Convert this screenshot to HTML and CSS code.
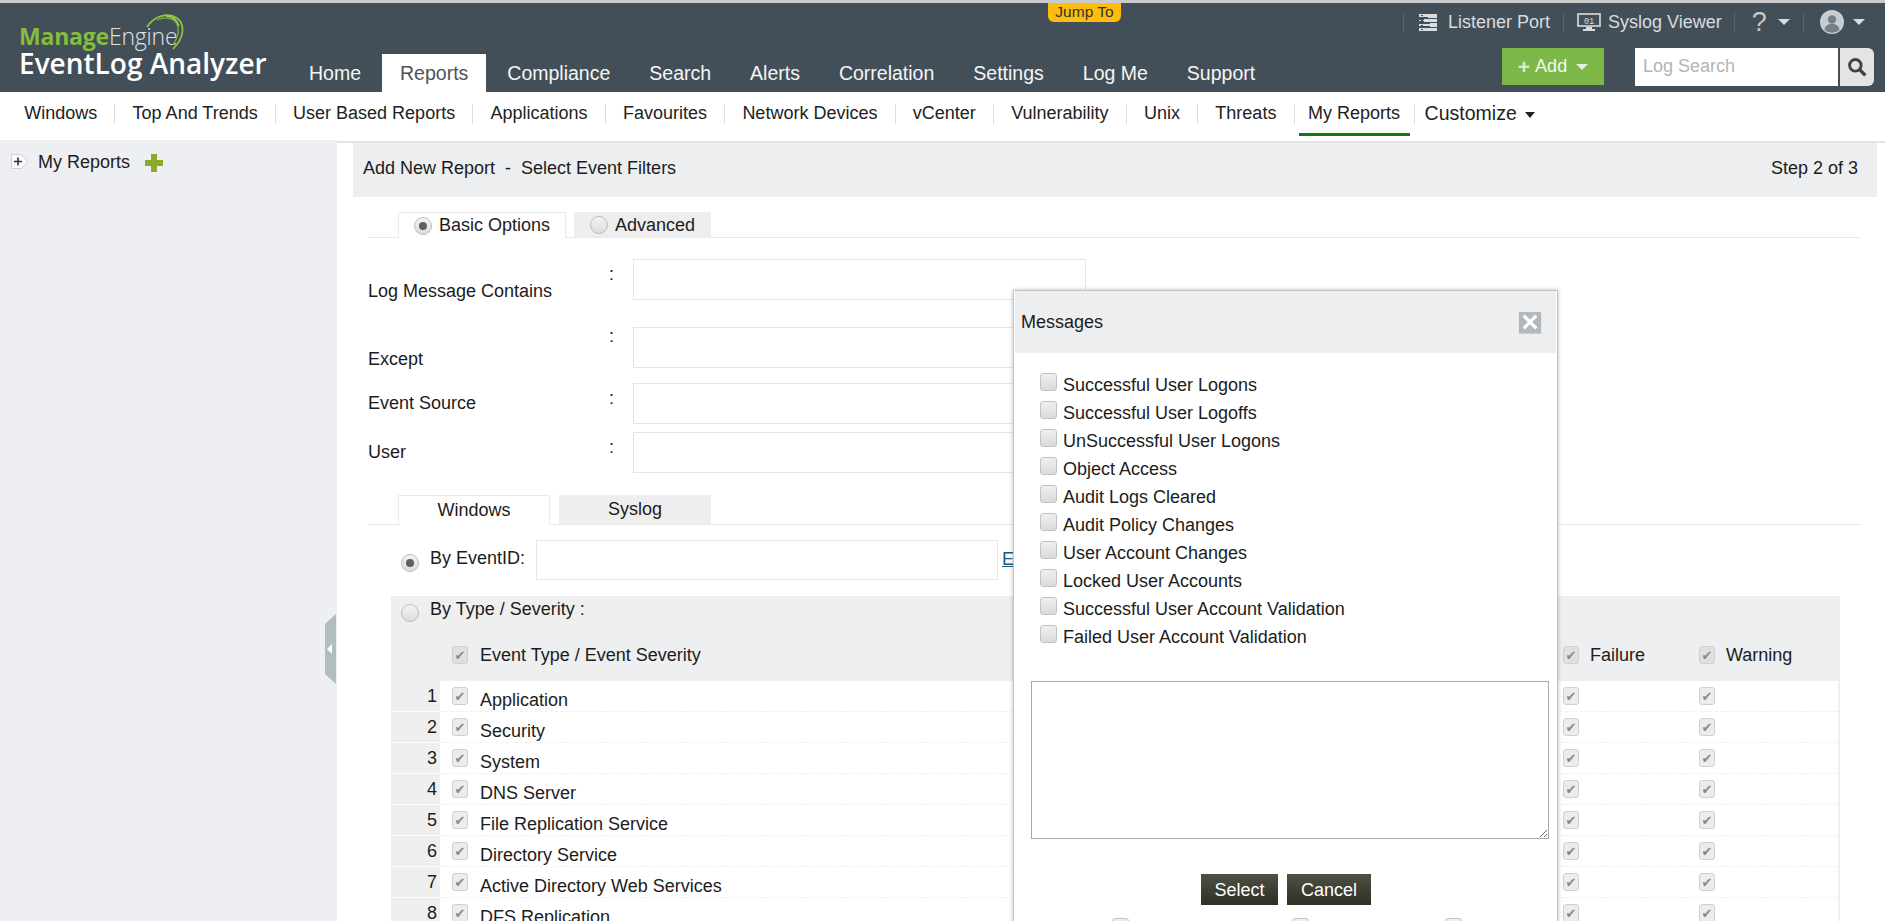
FILE: index.html
```html
<!DOCTYPE html>
<html lang="en">
<head>
<meta charset="utf-8">
<title>EventLog Analyzer</title>
<link rel="stylesheet" href="styles.css">
</head>
<body>
<div class="page">
  <header class="header">
    <div class="logo">
      <div class="logo-me"><b>Manage</b>Engine</div>
      <svg class="logo-arc" width="42" height="40" viewBox="0 0 42 40" fill="none"><path d="M1 15C8 4 22 0 31 6c8 6 8 19-4 31" stroke="#8cc63f" stroke-width="1.700"/><path d="M11 8c9-4 17-2 20 4 3 6 1 13-4 21" stroke="#7fae3c" stroke-width="1.300"/><path d="M20 4c7 0 11 4 13 10" stroke="#a8cf6a" stroke-width="1.300"/></svg>
      <div class="logo-product">EventLog Analyzer</div>
    </div>
    <nav class="main-nav">
      <a class="main-tab">Home</a>
      <a class="main-tab is-active">Reports</a>
      <a class="main-tab">Compliance</a>
      <a class="main-tab">Search</a>
      <a class="main-tab">Alerts</a>
      <a class="main-tab">Correlation</a>
      <a class="main-tab">Settings</a>
      <a class="main-tab">Log Me</a>
      <a class="main-tab">Support</a>
    </nav>
    <div class="header-right">
      <div class="util-row">
        <i class="util-sep"></i>
        <svg class="util-icon" width="18" height="17" viewBox="0 0 18 17"><path fill="#d9dcde" d="M0 0h18v4H9V3H0zM0 6h5V5h13v3H5V7H0zM0 10h11V9h7v4h-7v-1H0zM0 14h18v3H0z"/><path fill="#434f58" d="M2 1h2v1H2zM2 6h2v1H2zM2 11h2v1H2zM2 15h2v1H2z"/></svg>
        <a class="util-link util-link--first">Listener Port</a>
        <i class="util-sep"></i>
        <svg class="util-icon util-icon--mon" width="24" height="18" viewBox="0 0 24 18"><rect x="1" y="1" width="22" height="12" fill="none" stroke="#d9dcde" stroke-width="1.600"/><text x="12" y="10.500" font-size="8.500" text-anchor="middle" font-family="Liberation Mono" fill="#d9dcde">01</text><path fill="#d9dcde" d="M9 14h6v2h3v2H6v-2h3z"/></svg>
        <a class="util-link util-link--mon">Syslog Viewer</a>
        <i class="util-sep util-sep--help"></i>
        <span class="help-mark">?</span>
        <i class="caret caret--help"></i>
        <i class="util-sep util-sep--user"></i>
        <svg class="avatar" width="24" height="24" viewBox="0 0 24 24"><circle cx="12" cy="12" r="12" fill="#c6ced3"/><circle cx="12" cy="9.500" r="4.200" fill="#74808a"/><path fill="#74808a" d="M4.500 20c.5-4.500 3.500-6 7.500-6s7 1.500 7.500 6a12 12 0 0 1-15 0z"/></svg>
        <i class="caret caret--user"></i>
      </div>
      <div class="action-row">
        <button class="add-btn"><span class="add-plus">+</span> Add <i class="caret caret--add"></i></button>
        <input class="log-search" type="text" placeholder="Log Search">
        <button class="search-btn" aria-label="Search"><svg width="20" height="20" viewBox="0 0 18 18" fill="none"><circle cx="7.500" cy="7.500" r="5.200" stroke="#3b434a" stroke-width="2.600"/><path d="M11.500 11.500 16.500 16.500" stroke="#3b434a" stroke-width="3"/></svg></button>
      </div>
    </div>
  </header>
  <div class="jump-to">Jump To</div>

  <nav class="sub-nav">
    <a class="sub-link">Windows</a><i class="sub-sep"></i>
    <a class="sub-link">Top And Trends</a><i class="sub-sep"></i>
    <a class="sub-link">User Based Reports</a><i class="sub-sep"></i>
    <a class="sub-link">Applications</a><i class="sub-sep"></i>
    <a class="sub-link">Favourites</a><i class="sub-sep"></i>
    <a class="sub-link">Network Devices</a><i class="sub-sep"></i>
    <a class="sub-link">vCenter</a><i class="sub-sep"></i>
    <a class="sub-link">Vulnerability</a><i class="sub-sep"></i>
    <a class="sub-link">Unix</a><i class="sub-sep"></i>
    <a class="sub-link">Threats</a><i class="sub-sep"></i>
    <a class="sub-link is-current">My Reports</a><i class="sub-sep"></i>
    <a class="sub-link sub-link--custom">Customize <i class="caret caret--dark"></i></a>
  </nav>

  <main class="main">
    <aside class="sidebar">
      <svg class="tree-toggle" width="18" height="17" viewBox="0 0 18 17" fill="none"><path d="M.5 1.500h10l6.500 7-6.500 7H.5z" fill="#fbfbfb" stroke="#cfd1d4"/><path d="M3 8.500h8M7 4.500v8" stroke="#333" stroke-width="1.600"/></svg>
      <span class="side-label">My Reports</span>
      <svg class="side-add" width="18" height="18" viewBox="0 0 18 18"><path fill="#8aab2b" d="M6 0h6v6h6v6h-6v6H6v-6H0V6h6z"/></svg>
    </aside>
    <section class="content">
      <div class="title-bar">
        <span>Add New Report &nbsp;-&nbsp; Select Event Filters</span>
        <span>Step 2 of 3</span>
      </div>

      <div class="tabs tabs--options">
        <div class="tab tab--on tab--basic"><input class="radio" type="radio" name="mode" checked> Basic Options</div>
        <div class="tab tab--off tab--adv"><input class="radio" type="radio" name="mode"> Advanced</div>
      </div>

      <div class="form-row form-row--first form-row--tall">
        <label class="form-label">Log Message Contains</label><span class="form-colon form-colon--a">:</span><input class="form-input" type="text">
      </div>
      <div class="form-row form-row--second form-row--tall">
        <label class="form-label">Except</label><span class="form-colon form-colon--b">:</span><input class="form-input" type="text">
      </div>
      <div class="form-row form-row--third">
        <label class="form-label">Event Source</label><span class="form-colon form-colon--c">:</span><input class="form-input" type="text">
      </div>
      <div class="form-row form-row--fourth">
        <label class="form-label">User</label><span class="form-colon form-colon--c">:</span><input class="form-input" type="text">
      </div>

      <div class="tabs tabs--source">
        <div class="tab tab--on tab--win">Windows</div>
        <div class="tab tab--off tab--sys">Syslog</div>
      </div>

      <div class="event-id-row">
        <input class="radio radio--event" type="radio" name="by" checked>
        <span class="event-id-label">By EventID:</span>
        <input class="event-id-input" type="text">
        <a class="event-link">Ev</a>
      </div>

      <div class="severity">
        <div class="severity-top">
          <input class="radio radio--sev" type="radio" name="by">
          <span class="severity-title">By Type / Severity :</span>
        </div>
        <div class="severity-head">
          <div class="col-main"><input class="chk" type="checkbox" checked disabled><span class="chk-text">Event Type / Event Severity</span></div>
          <div class="col-a"><input class="chk" type="checkbox" checked disabled><span class="col-text">Failure</span></div>
          <div class="col-b"><input class="chk" type="checkbox" checked disabled><span class="col-text">Warning</span></div>
        </div>
        <div class="sev-row"><span class="sev-num">1</span><div class="sev-cells"><div class="col-main"><input class="chk" type="checkbox" checked disabled><span class="chk-text">Application</span></div><div class="col-a"><input class="chk" type="checkbox" checked disabled></div><div class="col-b"><input class="chk" type="checkbox" checked disabled></div></div></div>
        <div class="sev-row"><span class="sev-num">2</span><div class="sev-cells"><div class="col-main"><input class="chk" type="checkbox" checked disabled><span class="chk-text">Security</span></div><div class="col-a"><input class="chk" type="checkbox" checked disabled></div><div class="col-b"><input class="chk" type="checkbox" checked disabled></div></div></div>
        <div class="sev-row"><span class="sev-num">3</span><div class="sev-cells"><div class="col-main"><input class="chk" type="checkbox" checked disabled><span class="chk-text">System</span></div><div class="col-a"><input class="chk" type="checkbox" checked disabled></div><div class="col-b"><input class="chk" type="checkbox" checked disabled></div></div></div>
        <div class="sev-row"><span class="sev-num">4</span><div class="sev-cells"><div class="col-main"><input class="chk" type="checkbox" checked disabled><span class="chk-text">DNS Server</span></div><div class="col-a"><input class="chk" type="checkbox" checked disabled></div><div class="col-b"><input class="chk" type="checkbox" checked disabled></div></div></div>
        <div class="sev-row"><span class="sev-num">5</span><div class="sev-cells"><div class="col-main"><input class="chk" type="checkbox" checked disabled><span class="chk-text">File Replication Service</span></div><div class="col-a"><input class="chk" type="checkbox" checked disabled></div><div class="col-b"><input class="chk" type="checkbox" checked disabled></div></div></div>
        <div class="sev-row"><span class="sev-num">6</span><div class="sev-cells"><div class="col-main"><input class="chk" type="checkbox" checked disabled><span class="chk-text">Directory Service</span></div><div class="col-a"><input class="chk" type="checkbox" checked disabled></div><div class="col-b"><input class="chk" type="checkbox" checked disabled></div></div></div>
        <div class="sev-row"><span class="sev-num">7</span><div class="sev-cells"><div class="col-main"><input class="chk" type="checkbox" checked disabled><span class="chk-text">Active Directory Web Services</span></div><div class="col-a"><input class="chk" type="checkbox" checked disabled></div><div class="col-b"><input class="chk" type="checkbox" checked disabled></div></div></div>
        <div class="sev-row"><span class="sev-num">8</span><div class="sev-cells"><div class="col-main"><input class="chk" type="checkbox" checked disabled><span class="chk-text">DFS Replication</span></div><div class="col-a"><input class="chk" type="checkbox" checked disabled></div><div class="col-b"><input class="chk" type="checkbox" checked disabled></div></div></div>
      </div>
    </section>
  </main>

  <svg class="side-grip" width="12" height="70" viewBox="0 0 12 70"><path fill="#b1bdc0" d="M11 0v70L0 60V10z"/><path fill="#fff" d="M2 35l5-5v10z"/></svg>

  <div class="modal">
    <div class="modal-head">
      <span>Messages</span>
      <span class="modal-close"><svg width="16" height="16" viewBox="0 0 14 14"><path d="M1.500 1.500l11 11M12.500 1.500l-11 11" stroke="#fff" stroke-width="2.800"/></svg></span>
    </div>
    <div class="modal-list">
      <label class="msg"><input class="msg-chk" type="checkbox"><span>Successful User Logons</span></label>
      <label class="msg"><input class="msg-chk" type="checkbox"><span>Successful User Logoffs</span></label>
      <label class="msg"><input class="msg-chk" type="checkbox"><span>UnSuccessful User Logons</span></label>
      <label class="msg"><input class="msg-chk" type="checkbox"><span>Object Access</span></label>
      <label class="msg"><input class="msg-chk" type="checkbox"><span>Audit Logs Cleared</span></label>
      <label class="msg"><input class="msg-chk" type="checkbox"><span>Audit Policy Changes</span></label>
      <label class="msg"><input class="msg-chk" type="checkbox"><span>User Account Changes</span></label>
      <label class="msg"><input class="msg-chk" type="checkbox"><span>Locked User Accounts</span></label>
      <label class="msg"><input class="msg-chk" type="checkbox"><span>Successful User Account Validation</span></label>
      <label class="msg"><input class="msg-chk" type="checkbox"><span>Failed User Account Validation</span></label>
    </div>
    <textarea class="modal-text"></textarea>
    <div class="modal-actions">
      <button class="dark-btn dark-btn--select">Select</button>
      <button class="dark-btn dark-btn--cancel">Cancel</button>
    </div>
    <div class="modal-below">
      <input class="msg-chk" type="checkbox">
      <input class="msg-chk" type="checkbox">
      <input class="msg-chk" type="checkbox">
    </div>
  </div>
</div>
</body>
</html>
```

FILE: styles.css
```css
* { box-sizing: border-box; }
html, body { margin: 0; height: 100%; overflow: hidden; }
body { font-family: "Liberation Sans", Arial, sans-serif; font-size: 18px; color: #1c1c1c; background: #fff; }
a { color: inherit; text-decoration: none; }
i { display: block; }
button { font-family: inherit; border: 0; padding: 0; }
input, textarea { font-family: inherit; margin: 0; }

.page { height: 100%; display: flex; flex-direction: column; overflow: hidden; position: relative; }

/* header */
.header { flex: none; height: 92px; border-top: 3px solid #c9cbcd; background: #434f58; display: flex; color: #fff; position: relative; }
.logo { width: 291px; flex: none; padding: 20px 0 0 19px; position: relative; }
.logo-me { font-family: "Open Sans", sans-serif; font-size: 23px; line-height: 26px; color: #dfe3e5; font-weight: 300; letter-spacing: -.2px; }
.logo-me b { color: #85bd3c; font-weight: 700; }
.logo-arc { position: absolute; left: 146px; top: 9px; }
.logo-product { font-family: "Open Sans", sans-serif; font-weight: 600; font-size: 28px; line-height: 32px; margin-top: -2px; color: #fff; white-space: nowrap; }

.main-nav { display: flex; align-self: flex-end; gap: 3px; flex: none; }
.main-tab { height: 38px; line-height: 38px; padding: 0 18px; font-size: 19.5px; color: #f4f5f5; }
.main-tab.is-active { background: #fff; color: #4e5358; }

.header-right { margin-left: auto; width: 482px; flex: none; display: flex; flex-direction: column; }
.util-row { height: 45px; display: flex; align-items: center; padding-bottom: 7px; color: #d9dcde; }
.util-sep { width: 1px; height: 21px; background: #58636b; }
.util-icon { margin-left: 15px; flex: none; }
.util-icon--mon { margin-left: 13px; }
.util-link { margin-left: 11px; white-space: nowrap; margin-right: 13px; font-size: 18px; }
.util-link--mon { margin-left: 7px; margin-right: 12px; }
.util-sep--help { margin-left: 0; }
.help-mark { font-size: 27px; line-height: 28px; margin-left: 17px; color: #c4c9cc; width: 17px; }
.caret { width: 0; height: 0; border-left: 6px solid transparent; border-right: 6px solid transparent; border-top: 6px solid #d9dcde; }
.caret--help { margin-left: 9px; }
.util-sep--user { margin-left: 13px; }
.avatar { margin-left: 16px; flex: none; }
.caret--user { margin-left: 9px; }
.action-row { display: flex; align-items: flex-start; }
.add-btn { margin-left: 99px; width: 102px; height: 37px; background: #7cb848; color: #f4f7f0; font-size: 18px; display: flex; align-items: center; justify-content: center; gap: 5px; }
.add-plus { font-size: 21px; color: #dfe9d4; font-weight: 700; }
.caret--add { border-top-color: #e8efe0; margin-left: 4px; }
.log-search { margin-left: 31px; width: 203px; height: 38px; border: 0; background: #fff; padding: 0 8px 2px; font-size: 18px; border-radius: 0; }
.log-search::placeholder { color: #b4b4b4; opacity: 1; }
.search-btn { margin-left: 2px; width: 34px; height: 38px; background: #e4e4e2; border-radius: 0 6px 6px 0; display: flex; align-items: center; justify-content: center; }

.jump-to { position: absolute; left: 1048px; top: 3px; width: 73px; height: 19px; background: #fcbd0c; border-radius: 0 0 6px 6px; color: #333; font-size: 15.500px; line-height: 17px; text-align: center; }

/* sub navigation */
.sub-nav { flex: none; height: 48px; display: flex; align-items: flex-start; padding-left: 7px; background: #fff; }
.sub-link { height: 44px; padding: 1px 17.200px 0; display: flex; align-items: center; border-bottom: 3px solid transparent; white-space: nowrap; font-size: 18px; color: #222; }
.sub-sep { width: 1px; height: 20px; margin-top: 12px; background: #dcdde0; }
.sub-link.is-current { padding: 1px 9.500px 0; margin: 0 4px 0 4px; border-bottom-color: #0f7a10; }
.sub-link--custom { padding: 2px 10px 0; font-size: 19.500px; gap: 8px; }
.caret--dark { border-top-color: #222; border-left-width: 5px; border-right-width: 5px; border-top-width: 6px; margin-top: 2px; }

/* main */
.main { flex: 1; min-height: 0; display: flex; overflow: hidden; }
.sidebar { width: 337px; flex: none; background: #eeeff2; display: flex; align-items: flex-start; padding: 13px 0 0 11px; }
.tree-toggle { flex: none; }
.side-label { margin-left: 9px; line-height: 18px; }
.side-add { margin-left: 15px; margin-top: 1px; flex: none; }

.content { flex: 1; min-width: 0; padding: 2px 8px 0 16px; border-top: 2px solid #e3e4e6; margin-top: 1px; background: #fff; }
.title-bar { height: 54px; margin-top: -2px; background: #edeef0; display: flex; align-items: center; justify-content: space-between; padding: 0 19px 3px 10px; white-space: nowrap; }

.tabs { display: flex; margin: 15px 16px 0 15px; height: 26px; padding-left: 30px; border-bottom: 1px solid #e9e9e9; }
.tab { display: flex; align-items: center; height: 26px; white-space: nowrap; }
.tab--on { background: #fff; border: 1px solid #eaeaea; border-bottom: 0; }
.tab--off { background: #efeeee; height: 25px; }
.tab--basic { width: 168px; padding-left: 15px; gap: 7px; }
.tab--adv { width: 137px; margin-left: 8px; padding: 1px 0 0 16px; gap: 7px; }
.tabs--source { margin-top: 22px; height: 30px; }
.tabs--source .tab { height: 30px; justify-content: center; }
.tabs--source .tab--off { height: 29px; }
.tab--win { width: 152px; }
.tab--sys { width: 152px; margin-left: 9px; }

.radio { appearance: none; -webkit-appearance: none; width: 18px; height: 18px; margin: 0; border-radius: 50%; border: 1px solid #bdbdbd; background: linear-gradient(#f4f4f4, #dcdcdc); display: grid; place-items: center; flex: none; }
.radio:checked::after { content: ""; width: 8px; height: 8px; border-radius: 50%; background: #5f5f5f; }

.form-row { display: flex; height: 41px; margin-left: 16px; }
.form-row--first { margin-top: 21px; }
.form-row--second { margin-top: 27px; }
.form-row--third { margin-top: 15px; }
.form-row--fourth { margin-top: 8px; }
.form-label { width: 241px; flex: none; align-self: center; white-space: nowrap; line-height: 20px; margin-left: -1px; padding-bottom: 2px; box-sizing: content-box; }
.form-row--tall .form-label { padding: 23px 0 0; }
.form-colon { width: 24px; flex: none; align-self: center; line-height: 20px; box-sizing: content-box; }
.form-colon--a { padding-bottom: 11px; }
.form-colon--b { padding-bottom: 23px; }
.form-colon--c { padding-bottom: 11px; }
.form-input { width: 453px; height: 41px; border: 1px solid #e5e5e5; background: #fff; }

.event-id-row { display: flex; margin: 15px 0 0 48px; height: 41px; align-items: flex-start; }
.radio--event { margin-top: 14px; }
.event-id-label { margin-left: 11px; margin-top: 8px; line-height: 20px; width: 106px; flex: none; white-space: nowrap; }
.event-id-input { width: 462px; height: 40px; border: 1px solid #e5e5e5; }
.event-link { margin-left: 4px; margin-top: 9px; line-height: 20px; color: #1c5a80; text-decoration: underline; white-space: nowrap; }

.severity { margin: 15px 37px 0 38px; background: #efefef; }
.severity-top { height: 33px; display: flex; align-items: flex-start; padding-left: 10px; }
.radio--sev { margin-top: 8px; }
.severity-title { margin-left: 11px; margin-top: 3px; line-height: 20px; }
.severity-head { height: 52px; display: flex; align-items: center; padding: 0 2px 0 61px; background: #eeeff0; }
.col-main { flex: 1; display: flex; align-items: center; min-width: 0; }
.col-a { width: 136px; flex: none; display: flex; align-items: center; }
.col-b { width: 139px; flex: none; display: flex; align-items: center; }
.chk-text { margin-left: 12px; white-space: nowrap; }
.col-text { margin-left: 11px; }
.chk { appearance: none; -webkit-appearance: none; width: 16px; height: 18px; margin: 0; border: 1px solid #d0d0d0; border-radius: 3px; background: #ececec; display: grid; place-items: center; flex: none; }
.chk::after { content: "\2714"; font-family: "DejaVu Sans", sans-serif; font-size: 13px; line-height: 1; color: #8a8a8a; }
.severity-head .chk { background: #e0e0e0; }

.sev-row { height: 31px; display: flex; }
.sev-num { width: 49px; flex: none; text-align: right; padding: 5px 3px 0 0; line-height: 20px; border-bottom: 1px solid #fff; }
.sev-cells { flex: 1; margin-right: 2px; padding-left: 12px; background: #fff; display: flex; align-items: flex-start; border-bottom: 1px dashed #f1f1f1; }
.sev-cells .col-main, .sev-cells .col-a, .sev-cells .col-b { height: 30px; align-items: flex-start; padding-top: 7px; }
.sev-cells .chk { margin-top: -1px; }
.sev-cells .chk-text { line-height: 20px; margin-top: 2px; }

/* side grip */
.side-grip { position: absolute; left: 325px; top: 614px; }

/* modal */
.modal { position: absolute; left: 1013px; top: 290px; width: 545px; height: 660px; background: #fff; border: 1px solid #c6c6c6; padding: 0 1px; box-shadow: 0 0 4px rgba(0,0,0,.28); }
.modal-head { height: 62px; background: #edeef0; display: flex; align-items: center; justify-content: space-between; padding: 0 15px 0 6px; }
.modal-close { width: 22px; height: 21px; background: #b4b8bb; display: grid; place-items: center; box-shadow: 0 1px 1px #ccc; }
.modal-list { padding: 20px 0 0 25px; }
.msg { display: flex; height: 28px; }
.msg-chk { appearance: none; -webkit-appearance: none; width: 17px; height: 18px; margin: 0; border: 1px solid #c2c2c2; border-radius: 3px; background: linear-gradient(#efefef, #dadada); flex: none; }
.msg span { margin-left: 6px; margin-top: 2px; line-height: 20px; white-space: nowrap; }
.modal-text { display: block; margin: 28px 0 0 16px; width: 518px; height: 158px; border: 1px solid #aaa; background: #fff; }
.modal-actions { display: flex; margin: 35px 0 0 186px; }
.dark-btn { height: 31px; background: linear-gradient(#4e5142, #2e2f27); color: #fff; font-size: 18px; padding-top: 2px; }
.dark-btn--select { width: 77px; }
.dark-btn--cancel { width: 84px; margin-left: 9px; }
.modal-below { display: flex; margin: 13px 0 0 97px; }
.modal-below .msg-chk + .msg-chk { margin-left: 163px; }
.modal-below .msg-chk + .msg-chk + .msg-chk { margin-left: 136px; }
```
